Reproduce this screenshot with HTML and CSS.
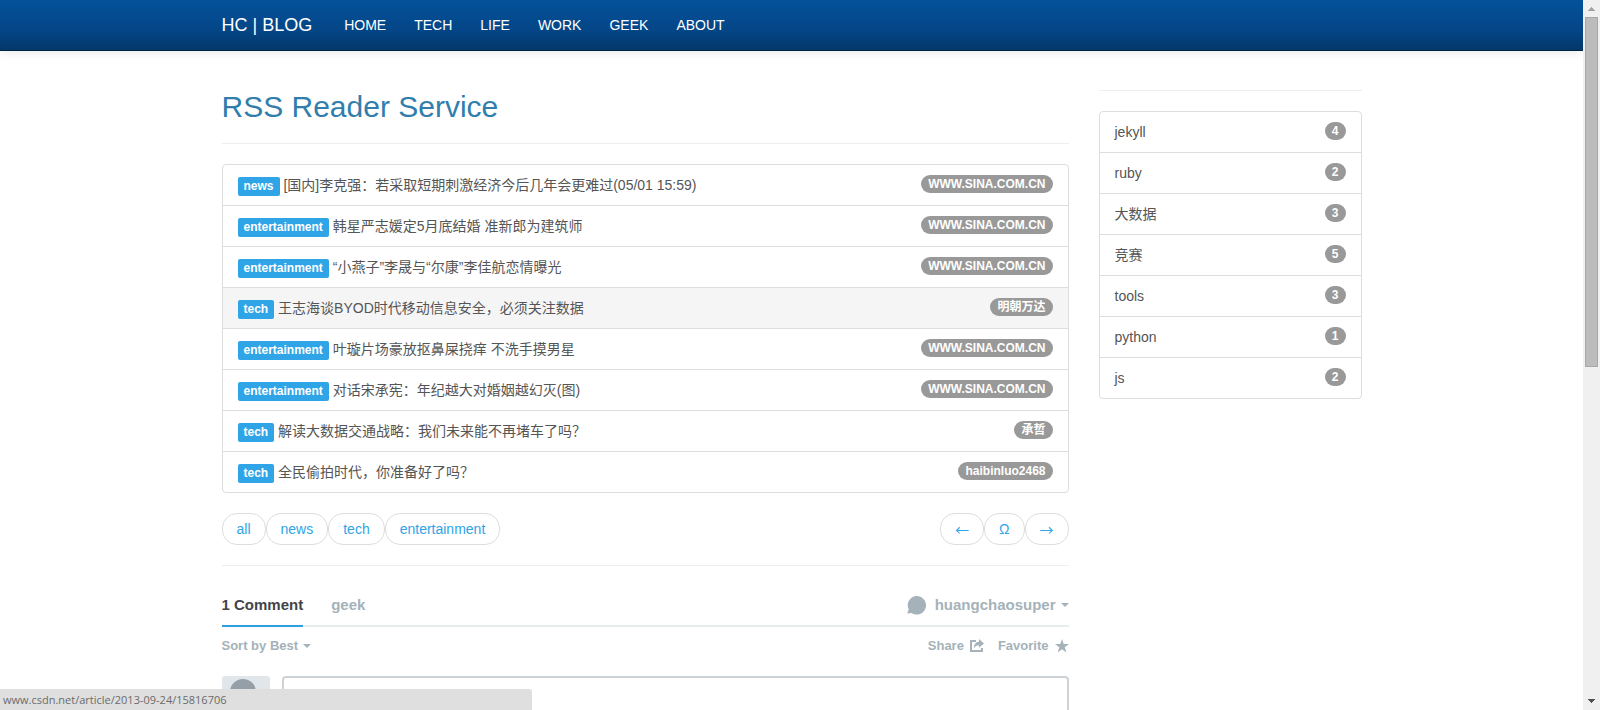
FILE: index.html
```html
<!DOCTYPE html>
<html lang="zh-CN">
<head>
<meta charset="utf-8">
<title>RSS Reader Service</title>
<link rel="stylesheet" href="styles.css">
</head>
<body>
<div class="window">
  <div class="page">
    <header class="navbar">
      <nav class="container nav">
        <a class="brand" href="#">HC | BLOG</a>
        <a class="nav-link" href="#">HOME</a>
        <a class="nav-link" href="#">TECH</a>
        <a class="nav-link" href="#">LIFE</a>
        <a class="nav-link" href="#">WORK</a>
        <a class="nav-link" href="#">GEEK</a>
        <a class="nav-link" href="#">ABOUT</a>
      </nav>
    </header>
    <div class="container columns">
      <main class="main">
        <h1 class="title"><a href="#">RSS Reader Service</a></h1>
        <hr class="rule">
        <div class="list">
          <a class="item" href="#"><span class="item-text"><span class="label">news</span> [国内]李克强：若采取短期刺激经济今后几年会更难过(05/01 15:59)</span><span class="badge">WWW.SINA.COM.CN</span></a>
          <a class="item" href="#"><span class="item-text"><span class="label">entertainment</span> 韩星严志媛定5月底结婚 准新郎为建筑师</span><span class="badge">WWW.SINA.COM.CN</span></a>
          <a class="item" href="#"><span class="item-text"><span class="label">entertainment</span> “小燕子”李晟与“尔康”李佳航恋情曝光</span><span class="badge">WWW.SINA.COM.CN</span></a>
          <a class="item item-hover" href="#"><span class="item-text"><span class="label">tech</span> 王志海谈BYOD时代移动信息安全，必须关注数据</span><span class="badge">明朝万达</span></a>
          <a class="item" href="#"><span class="item-text"><span class="label">entertainment</span> 叶璇片场豪放抠鼻屎挠痒 不洗手摸男星</span><span class="badge">WWW.SINA.COM.CN</span></a>
          <a class="item" href="#"><span class="item-text"><span class="label">entertainment</span> 对话宋承宪：年纪越大对婚姻越幻灭(图)</span><span class="badge">WWW.SINA.COM.CN</span></a>
          <a class="item" href="#"><span class="item-text"><span class="label">tech</span> 解读大数据交通战略：我们未来能不再堵车了吗？</span><span class="badge">承哲</span></a>
          <a class="item" href="#"><span class="item-text"><span class="label">tech</span> 全民偷拍时代，你准备好了吗？</span><span class="badge">haibinluo2468</span></a>
        </div>
        <div class="pager">
          <div class="pills">
            <a class="pill" href="#">all</a>
            <a class="pill" href="#">news</a>
            <a class="pill" href="#">tech</a>
            <a class="pill" href="#">entertainment</a>
          </div>
          <div class="pills">
            <a class="pill pill-arrow" href="#">←</a>
            <a class="pill" href="#">Ω</a>
            <a class="pill pill-arrow" href="#">→</a>
          </div>
        </div>
        <hr class="rule">
        <section class="comments">
          <div class="tabs">
            <a class="tab tab-active" href="#">1 Comment</a>
            <a class="tab" href="#">geek</a>
            <a class="tab user" href="#">
              <svg class="bubble" viewBox="0 0 19 19" aria-hidden="true"><path d="M9.7 0a9.3 9.3 0 1 1-5.2 17L.2 17.6l1.500-4.100A9.300 9.300 0 0 1 9.700 0z"/></svg>
              <span>huangchaosuper</span><span class="caret"></span>
            </a>
          </div>
          <div class="tools">
            <a class="tool sort" href="#">Sort by Best<span class="caret"></span></a>
            <a class="tool share" href="#">Share
              <svg class="icon" viewBox="0 0 14 14" aria-hidden="true"><path d="M0 1h6v2H2v8h9V9h2v4H0z"/><path d="M9 0l5 4.500-5 4.300V6.200C6.500 6.200 5 7 3.800 9.500 3.800 5.500 5.800 3 9 2.800z"/></svg></a>
            <a class="tool" href="#">Favorite
              <svg class="icon" viewBox="0 0 14 14" aria-hidden="true"><path d="M7 0l1.700 5H14L9.700 8.200 11.400 13.500 7 10.300 2.600 13.500 4.300 8.200 0 5h5.300z"/></svg></a>
          </div>
          <div class="composer">
            <svg class="avatar" viewBox="0 0 48 48" aria-hidden="true"><rect width="48" height="48" rx="3" fill="#e0e6e9"/><circle cx="21" cy="16" r="13" fill="#949fa8"/><path d="M2 48c0-12 9-18 19-18s19 6 19 18z" fill="#949fa8"/></svg>
            <textarea class="entry" aria-label="Join the discussion"></textarea>
          </div>
        </section>
      </main>
      <aside class="side">
        <hr class="rule">
        <div class="list">
          <a class="item" href="#"><span class="item-text">jekyll</span><span class="badge">4</span></a>
          <a class="item" href="#"><span class="item-text">ruby</span><span class="badge">2</span></a>
          <a class="item" href="#"><span class="item-text">大数据</span><span class="badge">3</span></a>
          <a class="item" href="#"><span class="item-text">竞赛</span><span class="badge">5</span></a>
          <a class="item" href="#"><span class="item-text">tools</span><span class="badge">3</span></a>
          <a class="item" href="#"><span class="item-text">python</span><span class="badge">1</span></a>
          <a class="item" href="#"><span class="item-text">js</span><span class="badge">2</span></a>
        </div>
      </aside>
    </div>
  </div>
  <div class="scrollbar" aria-hidden="true">
    <svg class="arrow" viewBox="0 0 17 17"><path d="M5 11h7v-1h-1V9h-1V8H9V7H8v1H7v1H6v1H5z" fill="#a3a3a3"/></svg>
    <div class="track"><div class="thumb"></div></div>
    <svg class="arrow" viewBox="0 0 17 17"><path d="M5 6h7v1h-1v1h-1v1H9v1H8V9H7V8H6V7H5z" fill="#505050"/></svg>
  </div>
</div>
<div class="status">www.csdn.net/article/2013-09-24/15816706</div>
</body>
</html>
```
FILE: styles.css
```css
* {
  box-sizing: border-box;
}

body {
  margin: 0;
  background: #fff;
  color: #555;
  font: 14px/20px "Liberation Sans", Arial, "Noto Sans CJK SC", sans-serif;
}

a {
  color: inherit;
  text-decoration: none;
}

.window {
  display: flex;
  height: 100vh;
  overflow: hidden;
}

.page {
  flex: 1;
  min-width: 0;
}

.container {
  max-width: 1170px;
  margin: 0 auto;
  padding: 0 15px;
}

.navbar {
  background: linear-gradient(#04519b, #044687 60%, #033769);
  border-bottom: 1px solid #022241;
  box-shadow: 0 1px 10px rgba(0, 0, 0, 0.1);
}

.nav {
  display: flex;
  align-items: center;
  height: 50px;
  color: #fff;
}

.brand {
  margin-right: 18px;
  font-size: 18px;
}

.nav-link {
  padding: 15px 14px;
}

.columns {
  display: flex;
  gap: 30px;
  padding-top: 19px;
}

.main {
  flex: 1;
  min-width: 0;
}

.side {
  width: 263px;
}

.title {
  margin: 20px 0;
  color: #317eac;
  font-size: 30px;
  font-weight: 400;
  line-height: 33px;
}

.rule {
  margin: 20px 0;
  border: 0;
  border-top: 1px solid #eee;
}

.list {
  margin-bottom: 20px;
  border: 1px solid #ddd;
  border-radius: 4px;
}

.item {
  display: flex;
  padding: 10px 15px;
}

.item + .item {
  border-top: 1px solid #ddd;
}

.item-hover {
  background: #f5f5f5;
}

.item-text {
  flex: 1;
  height: 20px;
}

.label {
  display: inline-block;
  padding: 3px 6px 4px;
  border-radius: 2px;
  background: #2fa4e7;
  color: #fff;
  font-size: 12px;
  font-weight: 700;
  line-height: 12px;
}

.badge {
  align-self: flex-start;
  padding: 3px 7px;
  border-radius: 10px;
  background: #999;
  color: #fff;
  font-size: 12px;
  font-weight: 700;
  line-height: 12px;
}

.pager,
.pills {
  display: flex;
  justify-content: space-between;
}

.pill {
  padding: 5px 14px;
  border: 1px solid #ddd;
  border-radius: 15px;
  color: #2fa4e7;
}

.pill-arrow {
  font-family: "Noto Sans CJK SC", sans-serif;
}

.tabs {
  display: flex;
  gap: 28px;
  margin-top: 29px;
  border-bottom: 2px solid #e7eced;
  color: #a5b2b9;
  font-size: 15px;
  font-weight: 700;
}

.tab {
  padding-bottom: 10px;
}

.tab-active {
  margin-bottom: -2px;
  border-bottom: 2px solid #2e9fe6;
  color: #3f4549;
}

.user {
  display: flex;
  align-items: center;
  margin-left: auto;
}

.bubble {
  width: 19px;
  height: 19px;
  margin-right: 9px;
  fill: #a5b2b9;
}

.caret {
  display: inline-block;
  margin-left: 5px;
  border: 4px solid transparent;
  border-top-color: #a5b2b9;
  border-bottom: 0;
  vertical-align: middle;
}

.tools {
  display: flex;
  gap: 14px;
  padding: 9px 0 20px;
  color: #a5b2b9;
  font-size: 13px;
  font-weight: 700;
}

.tool {
  display: flex;
  align-items: center;
  gap: 6px;
}

.sort {
  gap: 0;
  margin-right: auto;
}

.icon {
  width: 14px;
  height: 14px;
  fill: #a5b2b9;
}

.composer {
  display: flex;
  gap: 12px;
}

.avatar {
  width: 48px;
  height: 48px;
}

.entry {
  flex: 1;
  height: 74px;
  border: 2px solid #ccd2d5;
  border-radius: 4px;
  resize: none;
}

.scrollbar {
  display: flex;
  flex-direction: column;
  width: 17px;
  background: #f0f0f0;
}

.arrow {
  width: 17px;
  height: 17px;
}

.track {
  flex: 1;
  padding: 0 2px;
}

.thumb {
  height: 350px;
  border: 1px solid #a8a8a8;
  background: #bcbcbc;
}

.status {
  position: fixed;
  bottom: 0;
  left: 0;
  width: 532px;
  padding: 0 3px;
  border-radius: 0 3px 0 0;
  background: #dfdfdf;
  color: #6b6b6b;
  font: 11px/21px "Open Sans", "Noto Sans", sans-serif;
}
```
